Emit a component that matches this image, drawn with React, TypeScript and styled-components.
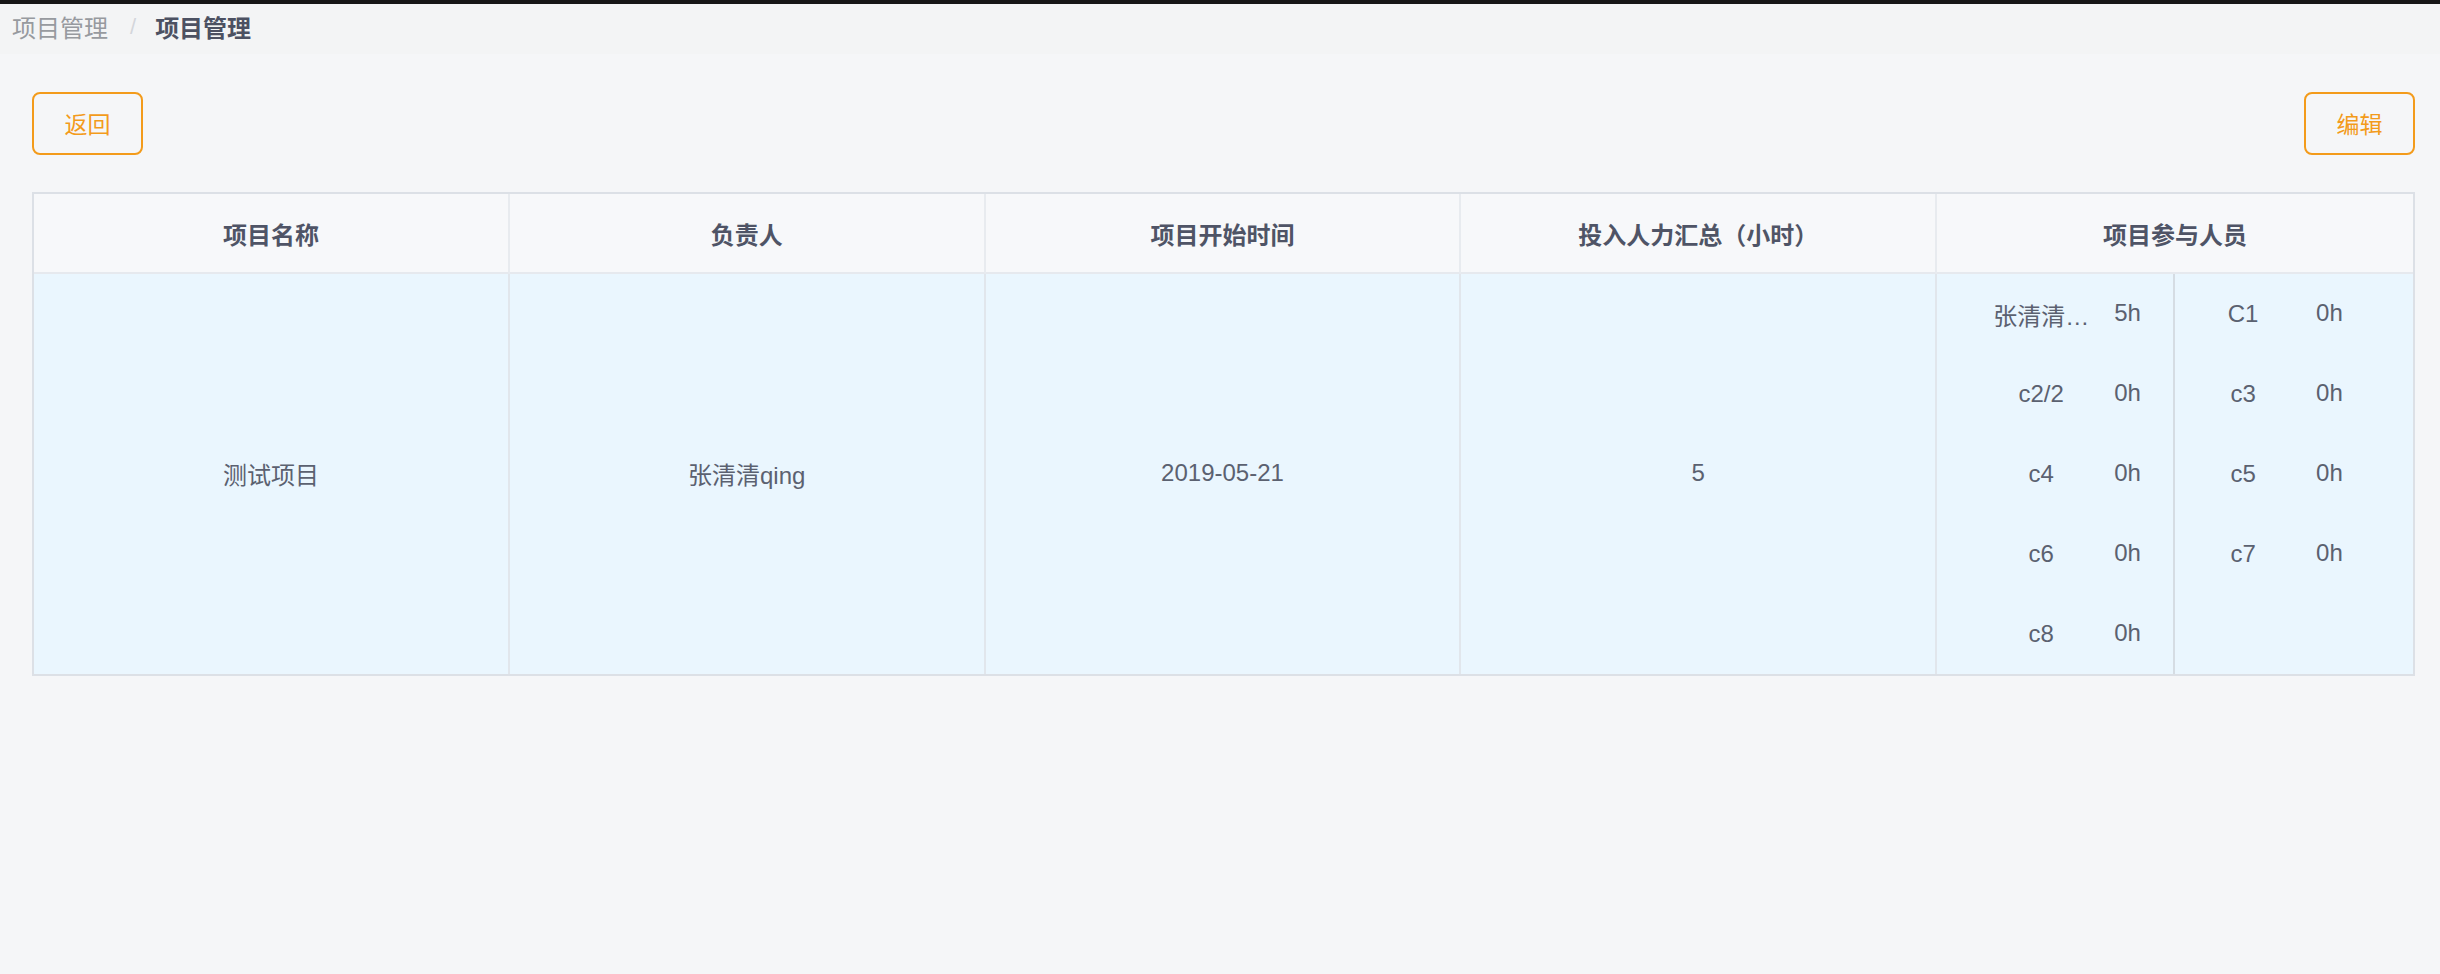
import * as React from 'react';
import styled, { createGlobalStyle } from 'styled-components';

const GlobalStyle = createGlobalStyle`
  html, body {
    margin: 0;
    padding: 0;
    background: #f5f6f8;
  }
  body {
    font-family: 'Liberation Sans', 'Noto Sans CJK SC', sans-serif;
  }
  * {
    box-sizing: border-box;
  }
`;

const ORANGE = '#f39b1b';

type Member = { name: string; hours: string };

const leftMembers: Member[] = [
  { name: '张清清qing', hours: '5h' },
  { name: 'c2/2', hours: '0h' },
  { name: 'c4', hours: '0h' },
  { name: 'c6', hours: '0h' },
  { name: 'c8', hours: '0h' },
];

const rightMembers: Member[] = [
  { name: 'C1', hours: '0h' },
  { name: 'c3', hours: '0h' },
  { name: 'c5', hours: '0h' },
  { name: 'c7', hours: '0h' },
];

const headers = ['项目名称', '负责人', '项目开始时间', '投入人力汇总（小时）', '项目参与人员'];

const App: React.FC = () => {
  return (
    <>
      <GlobalStyle />
      <TopStrip />
      <BreadcrumbBar>
        <Crumb>项目管理</Crumb>
        <Separator>/</Separator>
        <Crumb $active>项目管理</Crumb>
      </BreadcrumbBar>

      <Main>
        <Toolbar>
          <OutlineButton>返回</OutlineButton>
          <OutlineButton>编辑</OutlineButton>
        </Toolbar>

        <Table>
          {headers.map((h, i) => (
            <HeadCell key={h} $last={i === headers.length - 1}>
              {h}
            </HeadCell>
          ))}

          <BodyCell>测试项目</BodyCell>
          <BodyCell>张清清qing</BodyCell>
          <BodyCell>2019-05-21</BodyCell>
          <BodyCell>5</BodyCell>
          <MembersCell>
            <MemberList $pad={56} $divider>
              {leftMembers.map((m) => (
                <MemberRow key={m.name}>
                  <MemberName title={m.name}>{m.name}</MemberName>
                  <MemberHours>{m.hours}</MemberHours>
                </MemberRow>
              ))}
            </MemberList>
            <MemberList $pad={20}>
              {rightMembers.map((m) => (
                <MemberRow key={m.name}>
                  <MemberName title={m.name}>{m.name}</MemberName>
                  <MemberHours>{m.hours}</MemberHours>
                </MemberRow>
              ))}
            </MemberList>
          </MembersCell>
        </Table>
      </Main>
    </>
  );
};

const TopStrip = styled.div`
  height: 4px;
  background: #161616;
`;

const BreadcrumbBar = styled.nav`
  height: 50px;
  display: flex;
  align-items: center;
  padding: 0 0 5px 12px;
  background: #f3f4f5;
`;

const Crumb = styled.span<{ $active?: boolean }>`
  font-size: 24px;
  font-weight: ${({ $active }) => ($active ? 700 : 400)};
  color: ${({ $active }) => ($active ? '#4c5162' : '#979a9f')};
`;

const Separator = styled.span`
  margin: 0 19px 0 22px;
  font-size: 22px;
  color: #d3d6db;
`;

const Main = styled.main`
  padding: 38px 25px 0 32px;
`;

const Toolbar = styled.div`
  display: flex;
  justify-content: space-between;
  margin-bottom: 37px;
`;

const OutlineButton = styled.button`
  width: 111px;
  height: 63px;
  padding: 0 0 2px;
  border: 2px solid ${ORANGE};
  border-radius: 8px;
  background: transparent;
  color: ${ORANGE};
  font-family: 'Liberation Sans', 'Noto Sans CJK SC', sans-serif;
  font-size: 23px;
  cursor: pointer;
`;

const Table = styled.div`
  display: grid;
  grid-template-columns: repeat(5, 1fr);
  grid-template-rows: 80px 400px;
  border: 2px solid #dce0e6;
`;

const HeadCell = styled.div<{ $last?: boolean }>`
  display: flex;
  align-items: center;
  justify-content: center;
  background: #f7f8fa;
  border-bottom: 2px solid #e6e9ee;
  border-right: ${({ $last }) => ($last ? 'none' : '2px solid #e8ebef')};
  font-size: 24px;
  font-weight: 700;
  color: #4f5466;
`;

const BodyCell = styled.div`
  display: flex;
  align-items: center;
  justify-content: center;
  padding-bottom: 2px;
  background: #eaf6fe;
  border-right: 2px solid #e1e6ec;
  font-size: 24px;
  color: #5b6170;
`;

const MembersCell = styled.div`
  display: grid;
  grid-template-columns: 1fr 1fr;
  background: #eaf6fe;
`;

const MemberList = styled.div<{ $pad: number; $divider?: boolean }>`
  display: flex;
  flex-direction: column;
  padding-left: ${({ $pad }) => $pad}px;
  border-right: ${({ $divider }) => ($divider ? '2px solid #d5dce3' : 'none')};
`;

const MemberRow = styled.div`
  height: 80px;
  display: flex;
  align-items: center;
  gap: 25px;
`;

const MemberName = styled.span`
  width: 96px;
  text-align: center;
  overflow: hidden;
  white-space: nowrap;
  text-overflow: ellipsis;
  font-size: 24px;
  color: #5b6170;
`;

const MemberHours = styled.span`
  margin-top: -2px;
  font-size: 24px;
  color: #5b6170;
`;

export default App;
